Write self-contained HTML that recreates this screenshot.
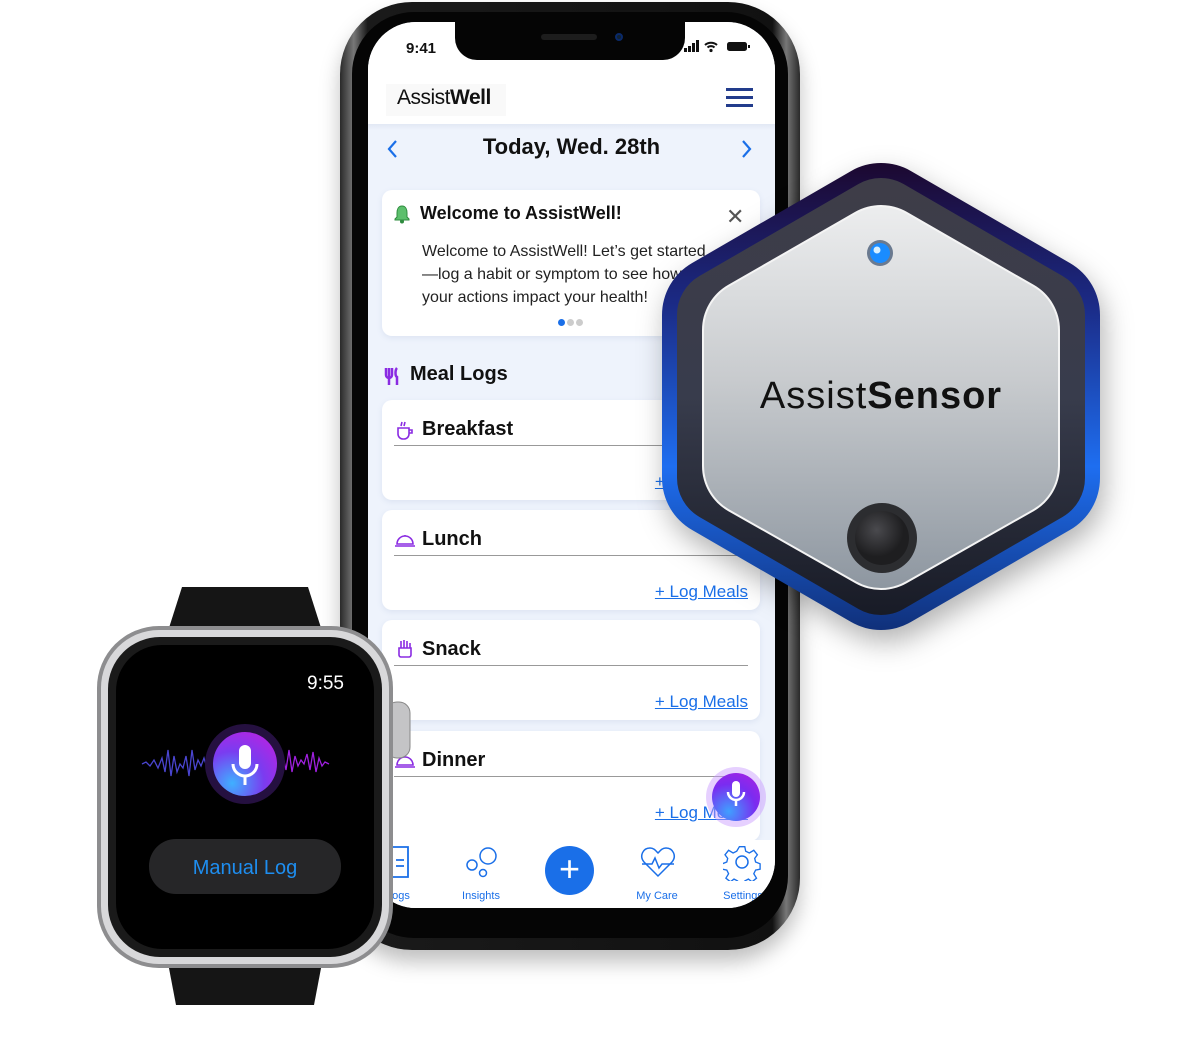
<!DOCTYPE html>
<html><head><meta charset="utf-8"><style>
*{margin:0;padding:0;box-sizing:border-box}
body{width:1194px;height:1046px;background:#fff;position:relative;overflow:hidden;font-family:"Liberation Sans",sans-serif}
.a{position:absolute}
.phone{left:340px;top:2px;width:460px;height:948px;border-radius:72px;background:linear-gradient(90deg,#2a2a2a,#777 3%,#1a1a1a 6%,#111 94%,#777 97%,#2a2a2a);box-shadow:0 12px 20px rgba(0,0,0,.25)}
.bezel{left:352px;top:12px;width:436px;height:926px;border-radius:62px;background:#050505}
.screen{left:368px;top:22px;width:407px;height:886px;border-radius:48px;background:#eef3fc;overflow:hidden}
.card{position:absolute;left:14px;width:378px;background:#fff;border-radius:10px;box-shadow:0 2px 6px rgba(120,140,190,.15)}
.meal{font-weight:bold;font-size:20px;color:#111;position:absolute;left:40px;top:18px}
.line{position:absolute;left:12px;right:12px;top:45px;height:1px;background:#999}
.lm{position:absolute;right:12px;top:72px;color:#1a6fe8;font-size:17px;text-decoration:underline}
.tab{position:absolute;top:50px;font-size:11px;color:#1a6fe8;text-align:center}
</style></head><body>
<div class="a phone"></div>
<div class="a bezel"></div>
<div class="a screen">
  <div class="a" style="left:0;top:0;width:407px;height:102px;background:#fff"></div>
  <div class="a" style="left:38px;top:18px;font-weight:bold;font-size:15px;color:#111">9:41</div>
  <div class="a" style="left:87px;top:-2px;width:230px;height:40px;background:#050505;border-radius:0 0 22px 22px"></div>
  <div class="a" style="left:173px;top:12px;width:56px;height:6px;background:#1d1d1d;border-radius:3px"></div>
  <div class="a" style="left:247px;top:11px;width:8px;height:8px;background:#123;border-radius:50%;border:2px solid #0a2a6a"></div>
  <svg class="a" style="left:316px;top:18px" width="70" height="14"><rect x="0" y="8" width="3" height="4" fill="#111"/><rect x="4" y="6" width="3" height="6" fill="#111"/><rect x="8" y="3" width="3" height="9" fill="#111"/><rect x="12" y="0" width="3" height="12" fill="#111"/><path d="M21 5a9 9 0 0 1 12 0M23.5 7.5a5 5 0 0 1 7 0" stroke="#111" stroke-width="2" fill="none"/><circle cx="27" cy="10.5" r="1.6" fill="#111"/><rect x="43" y="2" width="20" height="9" rx="2.5" fill="#111"/><rect x="64" y="5" width="2" height="3" fill="#111"/></svg>
  <div class="a" style="left:18px;top:62px;width:120px;height:32px;background:#f9f9f9"></div>
  <div class="a" style="left:29px;top:64px;font-size:21px;color:#111;letter-spacing:-0.5px">Assist<b>Well</b></div>
  <div class="a" style="left:358px;top:66px;width:27px;height:3px;background:#223c8c;box-shadow:0 8px 0 #223c8c,0 16px 0 #223c8c"></div>
  <div class="a" style="left:0;top:102px;width:407px;height:6px;background:linear-gradient(#e2e8f4,#eef3fc)"></div>
  <svg class="a" style="left:18px;top:117px" width="12" height="20"><path d="M10 2 3 10l7 8" stroke="#1a6fe8" stroke-width="2.2" fill="none"/></svg>
  <svg class="a" style="left:373px;top:117px" width="12" height="20"><path d="M2 2l7 8-7 8" stroke="#1a6fe8" stroke-width="2.2" fill="none"/></svg>
  <div class="a" style="left:0;width:407px;top:112px;text-align:center;font-weight:bold;font-size:22px;color:#111">Today, Wed. 28th</div>
  <div class="card" style="top:168px;height:146px">
    <svg class="a" style="left:12px;top:14px" width="16" height="20"><path d="M8 2c-4 0-5 4-5 7v4l-2 2v1h14v-1l-2-2V9c0-3-1-7-5-7z" fill="#5cbf6c" stroke="#2e8b3e" stroke-width="1"/><circle cx="8" cy="17.5" r="2" fill="#2e8b3e"/></svg>
    <div class="a" style="left:38px;top:13px;font-weight:bold;font-size:18px;color:#111">Welcome to AssistWell!</div>
    <div class="a" style="left:344px;top:14px;font-size:22px;color:#555">✕</div>
    <div class="a" style="left:40px;top:50px;font-size:16px;line-height:23px;color:#222;width:340px">Welcome to AssistWell! Let’s get started<br>—log a habit or symptom to see how<br>your actions impact your health!</div>
    <div class="a" style="left:176px;top:129px;width:7px;height:7px;border-radius:50%;background:#1a6fe8;box-shadow:9px 0 0 #ccc,18px 0 0 #ccc"></div>
  </div>
  <svg class="a" style="left:16px;top:345px" width="18" height="18"><path d="M2 1v7a3 3 0 0 0 6 0V1M5 1v17M13 1c-2 2-2 8 0 9v8" stroke="#8a2be2" stroke-width="2.5" fill="none"/></svg>
  <div class="a" style="left:42px;top:341px;font-weight:bold;font-size:20px;color:#111">Meal Logs</div>
  <div class="card" style="top:378px;height:100px"><div class="meal" style="color:#111">Breakfast</div><div class="line"></div><div class="lm">+ Log Meals</div><svg class="a" style="left:12px;top:20px" width="22" height="20"><path d="M4 8h11v6a5 5 0 0 1-5 5H9a5 5 0 0 1-5-5zM15 10h3v3h-3M8 2l-1 4M11 2l-1 4" stroke="#8a2be2" stroke-width="1.6" fill="none"/></svg></div>
  <div class="card" style="top:488px;height:100px"><div class="meal">Lunch</div><div class="line"></div><div class="lm">+ Log Meals</div><svg class="a" style="left:12px;top:22px" width="22" height="16"><path d="M3 12a8 8 0 0 1 16 0zM1 14h20M11 3v1" stroke="#8a2be2" stroke-width="1.6" fill="none"/></svg></div>
  <div class="card" style="top:598px;height:100px"><div class="meal">Snack</div><div class="line"></div><div class="lm">+ Log Meals</div><svg class="a" style="left:14px;top:18px" width="18" height="20"><path d="M3 10h12v7a2 2 0 0 1-2 2H5a2 2 0 0 1-2-2zM5 10V3M8 10V2M11 10V3M14 10V5" stroke="#8a2be2" stroke-width="1.6" fill="none"/></svg></div>
  <div class="card" style="top:709px;height:110px"><div class="meal">Dinner</div><div class="line"></div><div class="lm">+ Log Meals</div><svg class="a" style="left:12px;top:22px" width="22" height="16"><path d="M3 12a8 8 0 0 1 16 0zM1 14h20" stroke="#8a2be2" stroke-width="1.6" fill="none"/></svg></div>
  <div class="a" style="left:0;top:818px;width:407px;height:70px;background:#fff">
    <svg class="a" style="left:18px;top:4px" width="30" height="36"><path d="M4 3h18v30H4zM10 16h8M10 22h8" stroke="#1a6fe8" stroke-width="1.8" fill="none"/></svg>
    <div class="tab" style="left:18px">Logs</div>
    <svg class="a" style="left:96px;top:5px" width="34" height="34"><circle cx="24" cy="11" r="8" stroke="#1a6fe8" stroke-width="1.5" fill="none"/><circle cx="8" cy="20" r="5" stroke="#1a6fe8" stroke-width="1.5" fill="none"/><circle cx="19" cy="28" r="3.5" stroke="#1a6fe8" stroke-width="1.5" fill="none"/></svg>
    <div class="tab" style="left:90px;width:46px">Insights</div>
    <div class="a" style="left:177px;top:6px;width:49px;height:49px;border-radius:50%;background:#1a6fe8;color:#fff;font-size:36px;text-align:center;line-height:46px">+</div>
    <svg class="a" style="left:272px;top:6px" width="36" height="32"><path d="M18 30 4 16C-1 10 3 2 10 2c4 0 6 3 8 5 2-2 4-5 8-5 7 0 11 8 6 14z" stroke="#1a6fe8" stroke-width="1.5" fill="none"/><path d="M2 18h10l3-6 4 10 3-4h12" stroke="#1a6fe8" stroke-width="1.5" fill="none"/></svg>
    <div class="tab" style="left:264px;width:50px">My Care</div>
    <svg class="a" style="left:355px;top:3px" width="38" height="38"><circle cx="19" cy="19" r="6" stroke="#1a6fe8" stroke-width="1.5" fill="none"/><path d="M16 3h6l1 5 4 2 5-3 4 5-3 4 1 4 5 2v6l-5 1-2 4 3 5-5 4-4-3-4 2-1 5h-6l-1-5-4-2-4 3-5-4 3-5-2-4-5-1v-6l5-2 1-4-3-4 4-5 5 3 4-2z" stroke="#1a6fe8" stroke-width="1.5" fill="none" transform="translate(2 1) scale(.9)"/></svg>
    <div class="tab" style="left:350px;width:50px">Settings</div>
  </div>
</div>
<div class="a" style="left:706px;top:767px;width:60px;height:60px;border-radius:50%;background:rgba(200,150,255,.45)"></div>
<div class="a" style="left:712px;top:773px;width:48px;height:48px;border-radius:50%;background:radial-gradient(circle at 35% 80%,#3fa0ff,#7a2cf0 55%,#b020e0)"></div>
<svg class="a" style="left:724px;top:779px" width="24" height="34"><rect x="8" y="2" width="8" height="16" rx="4" fill="#fff"/><path d="M4 13a8 8 0 0 0 16 0M12 21v6" stroke="#fff" stroke-width="2.5" fill="none"/></svg>

<svg class="a" style="left:0;top:0" width="1194" height="1046">
<defs>
<linearGradient id="bl" gradientUnits="userSpaceOnUse" x1="0" y1="163" x2="0" y2="630"><stop offset="0" stop-color="#1c0830"/><stop offset=".3" stop-color="#1b2a85"/><stop offset=".65" stop-color="#1e6ef0"/><stop offset="1" stop-color="#10307a"/></linearGradient>
<linearGradient id="dk" gradientUnits="userSpaceOnUse" x1="0" y1="178" x2="0" y2="615"><stop offset="0" stop-color="#3e3d48"/><stop offset=".5" stop-color="#383c4c"/><stop offset="1" stop-color="#181b26"/></linearGradient>
<linearGradient id="sv" gradientUnits="userSpaceOnUse" x1="0" y1="207" x2="0" y2="590"><stop offset="0" stop-color="#ecedee"/><stop offset=".45" stop-color="#c8cbce"/><stop offset="1" stop-color="#8d96a0"/></linearGradient>
<radialGradient id="bt" cx=".4" cy=".35"><stop offset="0" stop-color="#4a4a4e"/><stop offset="1" stop-color="#1e1e20"/></radialGradient>
<radialGradient id="mc" cx=".3" cy=".8" r="1"><stop offset="0" stop-color="#3fb0ff"/><stop offset=".5" stop-color="#7a3cf0"/><stop offset="1" stop-color="#c020e0"/></radialGradient>
</defs>
<g filter="drop-shadow(4px 12px 14px rgba(0,0,0,.3))">
<polygon points="881,223 1040,315 1040,478 881,570 722,478 722,315" fill="url(#bl)" stroke="url(#bl)" stroke-width="120" stroke-linejoin="round"/>
</g>
<polygon points="881,223 1040,315 1040,478 881,570 722,478 722,315" fill="url(#dk)" stroke="url(#dk)" stroke-width="90" stroke-linejoin="round"/>
<polygon points="881,257 1008,330 1008,466 881,538 754,466 754,330" fill="#f4f4f4" stroke="#f4f4f4" stroke-width="104" stroke-linejoin="round"/>
<polygon points="881,257 1008,330 1008,466 881,538 754,466 754,330" fill="url(#sv)" stroke="url(#sv)" stroke-width="100" stroke-linejoin="round"/>
<circle cx="880" cy="253" r="13" fill="#6a7a90"/><circle cx="880" cy="253" r="10" fill="#1a8cff"/><circle cx="877" cy="250" r="3.5" fill="#d8f0ff"/>
<circle cx="882" cy="538" r="35" fill="#2c2d30"/><circle cx="882" cy="538" r="27" fill="url(#bt)"/>
<text x="881" y="408" text-anchor="middle" font-family="Liberation Sans" font-size="38" letter-spacing="1" fill="#111">Assist<tspan font-weight="bold">Sensor</tspan></text>

<path d="M182 587h126l14 44H168z" fill="#151515"/>
<path d="M168 963h154l-8 42H176z" fill="#151515"/>
<rect x="386" y="702" width="24" height="56" rx="11" fill="#c4c4c6" stroke="#888"/>
<rect x="97" y="626" width="296" height="342" rx="62" fill="#8d8d8f"/>
<rect x="101" y="630" width="288" height="334" rx="58" fill="#d8d8da"/>
<rect x="108" y="637" width="274" height="320" rx="52" fill="#1a1a1a"/>
<rect x="116" y="645" width="258" height="304" rx="46" fill="#000"/>
<text x="344" y="689" text-anchor="end" font-family="Liberation Sans" font-size="19" fill="#fff">9:55</text>
<path d="M142 764l4-2 4 4 4-6 4 8 4-10 3 14 3-22 3 26 3-20 3 16 3-8 3 4 3-12 3 20 3-26 3 20 3-10 3 6 3-8 3 10" stroke="#4a45d0" stroke-width="1.3" fill="none"/>
<path d="M280 764l3-8 3 14 3-20 3 22 3-16 3 10 3-6 3 4 3-10 3 16 3-18 3 20 3-14 3 8 3-4 4 2" stroke="#a020e0" stroke-width="1.3" fill="none"/>
<circle cx="245" cy="764" r="40" fill="#251040"/>
<circle cx="245" cy="764" r="32" fill="url(#mc)"/>
<rect x="239" y="745" width="12" height="24" rx="6" fill="#fff"/>
<path d="M233 764a12 12 0 0 0 24 0M245 777v8" stroke="#fff" stroke-width="3" fill="none"/>
<rect x="149" y="839" width="192" height="55" rx="27" fill="#262628"/>
<text x="245" y="874" text-anchor="middle" font-family="Liberation Sans" font-size="20" fill="#1e8ef0">Manual Log</text>
</svg>
</body></html>
